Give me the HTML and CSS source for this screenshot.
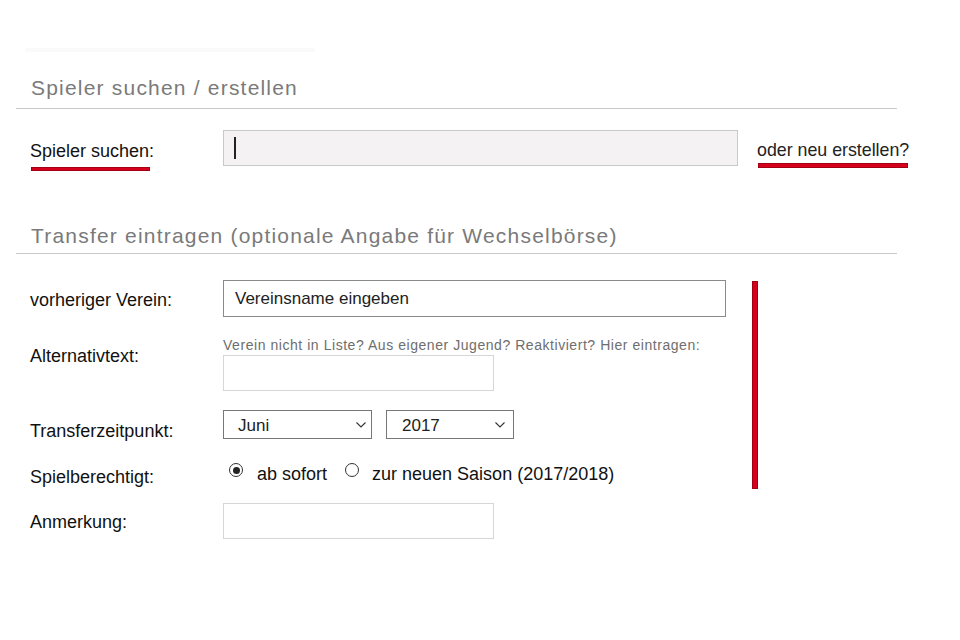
FILE: index.html
```html
<!DOCTYPE html>
<html lang="de">
<head>
<meta charset="utf-8">
<title>Spieler suchen / erstellen</title>
<link rel="stylesheet" href="styles.css">
</head>
<body>
<div class="page">
  <div class="ghost"></div>

  <section class="sec sec-search">
    <h2 class="sec-title">Spieler suchen / erstellen</h2>
    <div class="row row-search">
      <div class="lbl-col">
        <div class="lbl">Spieler suchen:</div>
        <div class="mark mark-lbl"></div>
      </div>
      <div class="field field-search"><span class="caret"></span></div>
      <div class="link-col">
        <a class="link">oder neu erstellen?</a>
        <div class="mark mark-link"></div>
      </div>
    </div>
  </section>

  <section class="sec sec-transfer">
    <h2 class="sec-title title-transfer">Transfer eintragen (optionale Angabe für Wechselbörse)</h2>
    <div class="form">
      <div class="row row-verein">
        <div class="lbl-col pad-verein"><div class="lbl">vorheriger Verein:</div></div>
        <div class="field field-verein">Vereinsname eingeben</div>
      </div>

      <div class="row row-alt">
        <div class="lbl-col pad-alt"><div class="lbl">Alternativtext:</div></div>
        <div class="ctl">
          <div class="hint">Verein nicht in Liste? Aus eigener Jugend? Reaktiviert? Hier eintragen:</div>
          <div class="field field-small field-alt"></div>
        </div>
      </div>

      <div class="row row-time">
        <div class="lbl-col pad-time"><div class="lbl">Transferzeitpunkt:</div></div>
        <div class="selects">
          <div class="select select-month">
            <span class="sel-text">Juni</span>
            <svg class="chev" width="10" height="6" viewBox="0 0 10 6"><path d="M0.5 0.5 L5 5 L9.5 0.5" fill="none" stroke="#333" stroke-width="1.1"/></svg>
          </div>
          <div class="select select-year">
            <span class="sel-text">2017</span>
            <svg class="chev" width="10" height="6" viewBox="0 0 10 6"><path d="M0.5 0.5 L5 5 L9.5 0.5" fill="none" stroke="#333" stroke-width="1.1"/></svg>
          </div>
        </div>
      </div>

      <div class="row row-radio">
        <div class="lbl-col pad-radio"><div class="lbl">Spielberechtigt:</div></div>
        <div class="radios">
          <span class="radio radio-on"><span class="dot"></span></span>
          <span class="radio-text">ab sofort</span>
          <span class="radio radio-second"></span>
          <span class="radio-text">zur neuen Saison (2017/2018)</span>
        </div>
      </div>

      <div class="row row-note">
        <div class="lbl-col pad-note"><div class="lbl">Anmerkung:</div></div>
        <div class="field field-small"></div>
      </div>

      <div class="mark mark-v"></div>
    </div>
  </section>
</div>
</body>
</html>
```

FILE: styles.css
```css
html, body {
  margin: 0;
  padding: 0;
  background: #ffffff;
}

body {
  font-family: "Liberation Sans", Arial, sans-serif;
  color: #111111;
}

.page {
  padding: 48px 0 0 16px;
  width: 881px;
}

.ghost {
  width: 290px;
  height: 4px;
  margin-left: 9px;
  background: #fafafa;
}

.sec-title {
  margin: 24px 0 0 0;
  padding: 0 0 8px 15px;
  font-size: 21px;
  line-height: 24px;
  font-weight: normal;
  letter-spacing: 1.2px;
  color: #7a7a7a;
  border-bottom: 1px solid #c9c9c9;
}

.title-transfer {
  margin-top: 53px;
  padding-bottom: 5px;
}

.row {
  display: flex;
  align-items: flex-start;
}

.row-search {
  margin-top: 21px;
}

.lbl-col {
  width: 207px;
  flex: none;
  box-sizing: border-box;
  padding-left: 14px;
  padding-top: 11px;
}

.lbl {
  font-size: 18px;
  line-height: 20px;
  color: #111111;
  white-space: nowrap;
}

.mark {
  background: #d5001b;
  box-shadow: inset 0 0 0 1px #a30014;
}

.mark-lbl {
  width: 119px;
  height: 4px;
  margin: 6px 0 0 1px;
}

.field {
  box-sizing: border-box;
  flex: none;
  background: #ffffff;
}

.field-search {
  width: 515px;
  height: 36px;
  background: #f4f2f2;
  border: 1px solid #c9c9c9;
  padding: 6px 0 0 10px;
}

.caret {
  display: block;
  width: 2px;
  height: 22px;
  background: #222222;
}

.link-col {
  margin-left: 19px;
  padding-top: 10px;
}

.link {
  display: block;
  font-size: 17.8px;
  line-height: 20px;
  color: #222222;
  white-space: nowrap;
}

.mark-link {
  width: 150px;
  height: 5px;
  margin: 3px 0 0 1px;
}

.form {
  position: relative;
  padding-top: 26px;
}

.field-verein {
  width: 503px;
  height: 37px;
  border: 1px solid #8a8a8a;
  display: flex;
  align-items: center;
  padding-left: 11px;
  font-size: 17px;
  color: #222222;
}

.pad-verein { padding-top: 10px; }

.row-alt { margin-top: 21px; }
.pad-alt { padding-top: 8px; }

.hint {
  font-size: 14px;
  line-height: 15px;
  color: #6e6e6e;
  white-space: nowrap;
  letter-spacing: 0.55px;
}

.field-small {
  width: 271px;
  height: 36px;
  border: 1px solid #d6d6d6;
}

.field-alt {
  margin-top: 2px;
}

.row-time {
  margin-top: 19px;
  height: 29px;
}
.pad-time { padding-top: 11px; }

.selects {
  display: flex;
  gap: 14px;
}

.select {
  box-sizing: border-box;
  height: 29px;
  border: 1px solid #777777;
  display: flex;
  align-items: center;
  justify-content: space-between;
  padding-top: 2px;
  font-size: 17px;
  color: #222222;
}

.select-month {
  width: 149px;
  padding-left: 14px;
  padding-right: 5px;
}

.select-year {
  width: 128px;
  padding-left: 15px;
  padding-right: 8px;
}

.chev {
  display: block;
  margin-top: -2px;
}

.row-radio {
  margin-top: 25px;
  height: 20px;
}
.pad-radio { padding-top: 3px; }

.radios {
  display: flex;
  align-items: flex-start;
  font-size: 18px;
  line-height: 20px;
  color: #111111;
  white-space: nowrap;
}

.radio {
  box-sizing: border-box;
  width: 14px;
  height: 14px;
  border: 1.3px solid #333333;
  border-radius: 50%;
  background: #ffffff;
  margin: -1px 14px 0 6px;
  display: flex;
  align-items: center;
  justify-content: center;
  flex: none;
}

.radio-second {
  margin-left: 18px;
  margin-right: 13px;
}

.dot {
  width: 7px;
  height: 7px;
  border-radius: 50%;
  background: #222222;
}

.row-note { margin-top: 19px; }
.pad-note { padding-top: 9px; }

.mark-v {
  position: absolute;
  left: 736px;
  top: 27px;
  width: 6px;
  height: 208px;
}
```
